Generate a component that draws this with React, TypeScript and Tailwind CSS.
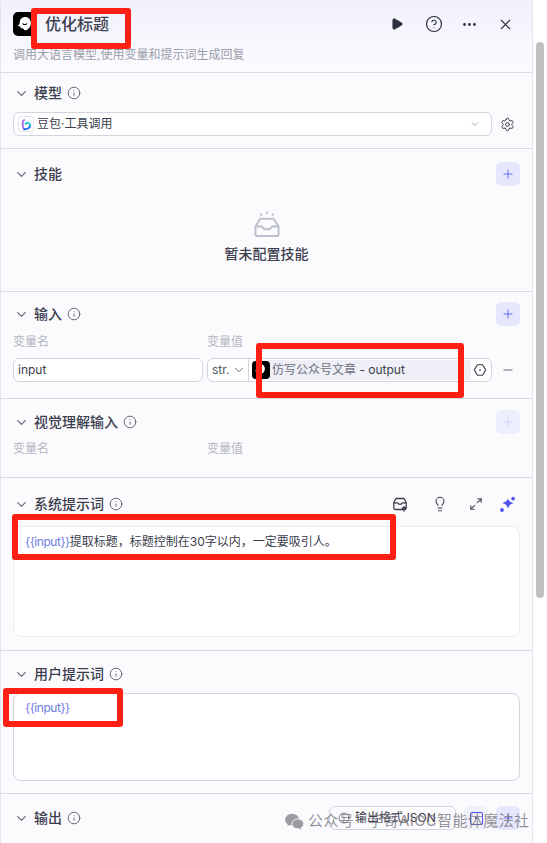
import { ChevronDown, CircleHelp, Ellipsis, Info, Lightbulb, Minus, Play, Plus, Settings, X } from 'lucide-react';
import type { ReactNode } from 'react';

const Logo = ({ className }: { className: string }) => (
  <div className={`flex shrink-0 items-center justify-center rounded-[4px] bg-black ${className}`}>
    <svg viewBox="0 0 24 24" className="h-[84%] w-[84%]">
      <path d="M12 3.500c-3.900 0-6.300 2.800-6.300 6.400 0 1.600-.9 3-2.200 4 .8.8 1.800 1 2.800.8-.1 1 .3 2 1 2.700.7-.4 1.300-.6 2-.5.7 1.200 1.700 2.100 3 2.600 3.600-1 6.600-4.300 6.600-8.800 0-4-2.700-7.200-6.900-7.200z" fill="#fff" />
      <path d="M9.500 11.500c.8 1.500 3.500 1.500 4.500 0" fill="none" stroke="#000" strokeWidth="1.200" strokeLinecap="round" />
    </svg>
  </div>
);

const PlusButton = ({ light }: { light?: boolean }) => (
  <button className={`flex h-6 w-6 items-center justify-center rounded-[5px] ${light ? 'bg-[#eeeffd] text-[#d3d5fb]' : 'bg-[#e6e7fd] text-[#6a6ef2]'}`}>
    <Plus className="h-[14px] w-[14px]" strokeWidth={1.8} />
  </button>
);

const Header = ({ title, noInfo, right }: { title: string; noInfo?: boolean; right?: ReactNode }) => (
  <div className="flex h-6 items-center pr-3 pl-[13px]">
    <ChevronDown className="h-[15px] w-[15px] text-[#5d6072]" strokeWidth={1.8} />
    <span className="ml-[5px] text-sm leading-6 font-medium text-[#3b3d4c]">{title}</span>
    {!noInfo && <Info className="ml-[5px] h-[14px] w-[14px] text-[#55586a]" strokeWidth={1.5} />}
    <div className="ml-auto flex items-center">{right}</div>
  </div>
);

const VarLabels = () => (
  <div className="flex pl-3 text-xs leading-4 text-[#b4b6c0]">
    <span className="w-[194px]">变量名</span>
    <span>变量值</span>
  </div>
);

const Variable = () => <span className="tracking-[-0.45px] text-[#6d7be2]">{'{{input}}'}</span>;

const DoubaoIcon = () => (
  <div className="flex h-4 w-4 items-center justify-center rounded-[3px] border border-[#e3e4ee] bg-white">
    <svg viewBox="0 0 16 16" className="h-[13px] w-[13px]">
      <path d="M5 2.500 C2.800 4 2.500 11 5 13.500" fill="none" stroke="#a66df0" strokeWidth="2.400" strokeLinecap="round" />
      <path d="M5 13.500 C8 14.500 12.500 12.500 12.500 9" fill="none" stroke="#1f6bf5" strokeWidth="2.400" strokeLinecap="round" />
      <path d="M12.500 9 C12.500 6.500 9 5 6.800 7" fill="none" stroke="#25c6d8" strokeWidth="2.400" strokeLinecap="round" />
    </svg>
  </div>
);

const EmptyBox = () => (
  <svg viewBox="0 0 28 28" className="h-[27px] w-[28px]" fill="none" stroke="#bcc0cd" strokeWidth="2" strokeLinecap="round" strokeLinejoin="round">
    <path d="M14 1.200v1.500M7.500 3l.8 1.200M20.500 3l-.8 1.200" strokeWidth="1.700" />
    <path d="M7 8h14l5 8v8a2 2 0 0 1-2 2H4a2 2 0 0 1-2-2v-8z" />
    <path d="M2.500 16H9c.5 2 2.500 3 5 3s4.500-1 5-3h6.500" />
  </svg>
);

const LibraryIcon = () => (
  <svg viewBox="0 0 16 16" className="h-4 w-4" fill="none" stroke="#3b3d4c" strokeWidth="1.300" strokeLinecap="round" strokeLinejoin="round">
    <path d="M4 2.500h8l2.200 4v5.500a1.500 1.500 0 0 1-1.500 1.500H3.300A1.500 1.500 0 0 1 1.800 12V6.500z" />
    <path d="M2 6.800h3.500c.4 1 1.300 1.500 2.500 1.500s2.100-.5 2.500-1.500H14" />
    <path d="M12 15v-4M10.500 12.300 12 10.800l1.500 1.500" stroke="#3b3d4c" />
  </svg>
);

const ExpandIcon = () => (
  <svg viewBox="0 0 16 16" className="h-[14px] w-[14px]" fill="none" stroke="#4d5060" strokeWidth="1.300" strokeLinecap="round" strokeLinejoin="round">
    <path d="M9.500 6.500 14 2M10 2h4v4M6.500 9.500 2 14M2 10v4h4" />
  </svg>
);

const SparkIcon = () => (
  <svg viewBox="0 0 16 16" className="h-[17px] w-[17px]" fill="#4d53f0">
    <path d="M8.500 2c.5 2.400 1.800 3.800 5.500 4.600-3.400.9-4.700 2.200-5.500 5.400-.8-3.200-2.200-4.500-5.500-5.400 3.300-.8 4.700-2.200 5.500-4.600z" />
    <circle cx="13.200" cy="2.500" r="1.700" />
    <circle cx="2.800" cy="13.200" r="1.800" />
  </svg>
);

const HexIcon = () => (
  <svg viewBox="0 0 16 16" className="h-[14px] w-[14px]" fill="none" stroke="#3b3d4c" strokeWidth="1.300" strokeLinejoin="round">
    <path d="M5 2h6l3.500 6-3.500 6H5L1.500 8z" />
    <circle cx="8" cy="8" r="1" fill="#3b3d4c" stroke="none" />
  </svg>
);

const WeChat = () => (
  <svg viewBox="0 0 20 18" className="h-[17px] w-[19px]" fill="#9b9ba1">
    <ellipse cx="7.500" cy="7" rx="7.500" ry="6.300" />
    <path d="M3 11l-.6 3 3.200-1.700z" />
    <ellipse cx="13.500" cy="11.500" rx="6.300" ry="5.300" stroke="#fbfbfe" strokeWidth="1" />
    <path d="M16.500 15.500l1.200 2.300-3.200-1.300z" />
  </svg>
);

export default function App() {
  return (
    <div className="relative flex h-[843px] w-[547px] overflow-hidden bg-white font-['Inter','Noto_Sans_CJK_SC',sans-serif]">
      <div className="flex h-full w-[533px] shrink-0 flex-col border-x border-[#e4e4ee] bg-[#fbfbfe]">
        {/* Title */}
        <div className="h-[73px] shrink-0 border-b border-[#d9d9e8] bg-gradient-to-b from-[#f1f1fc] to-[#fbfbfe] pt-3 pl-3">
          <div className="flex h-6 items-center">
            <Logo className="h-6 w-6 rounded-[5px]" />
            <span className="ml-2 text-base leading-6 font-medium text-[#3d3f4e]">优化标题</span>
            <div className="ml-auto flex items-center text-[#2e3040]">
              <Play className="mr-[-1px] h-[14px] w-[14px] fill-[#2e3040]" strokeWidth={1.5} />
              <CircleHelp className="ml-[22px] h-[18px] w-[18px]" strokeWidth={1.6} />
              <Ellipsis className="ml-[18px] h-[17px] w-[17px]" strokeWidth={2} />
              <X className="mr-[18px] ml-[19px] h-[17px] w-[17px]" strokeWidth={1.6} />
            </div>
          </div>
          <p className="mt-[9px] text-xs leading-5 text-[#9b9daa]">调用大语言模型,使用变量和提示词生成回复</p>
        </div>

        {/* Model */}
        <section className="h-[76px] shrink-0 border-b border-[#d9d9e8] pt-2">
          <Header title="模型" />
          <div className="mt-[7px] flex items-center pr-[17px] pl-3">
            <div className="flex h-6 w-[479px] items-center rounded-[6px] border border-[#d3d4e2] bg-white pr-[10px] pl-1">
              <DoubaoIcon />
              <span className="ml-[3px] text-xs text-[#3b3d4c]">豆包·工具调用</span>
              <ChevronDown className="ml-auto h-3 w-3 text-[#8a8c9a]" strokeWidth={1.5} />
            </div>
            <Settings className="ml-2 h-[15px] w-[15px] text-[#3b3d4c]" strokeWidth={1.6} />
          </div>
        </section>

        {/* Skills */}
        <section className="h-[143px] shrink-0 border-b border-[#d9d9e8] pt-[13px]">
          <Header title="技能" noInfo right={<PlusButton />} />
          <div className="mt-[25px] flex flex-col items-center">
            <EmptyBox />
            <span className="mt-[6px] text-sm leading-5 font-medium text-[#3f4150]">暂未配置技能</span>
          </div>
        </section>

        {/* Input */}
        <section className="h-[107px] shrink-0 border-b border-[#d9d9e8] pt-[10px]">
          <Header title="输入" right={<PlusButton />} />
          <div className="mt-2">
            <VarLabels />
          </div>
          <div className="mt-2 flex items-center pl-3">
            <div className="flex h-6 w-[190px] items-center rounded-[6px] border border-[#d3d4e2] bg-white pl-1 text-xs text-[#3b3d4c]">input</div>
            <div className="ml-1 flex h-6 w-[285px] items-center rounded-[6px] border border-[#d3d4e2] bg-white">
              <div className="flex h-full w-[41px] items-center border-r border-[#d3d4e2] pl-1 text-xs text-[#565867]">
                str.
                <ChevronDown className="ml-[3px] h-[14px] w-[14px] text-[#5d6072]" strokeWidth={1.5} />
              </div>
              <div className="ml-[3px] flex h-5 w-[219px] items-center rounded-[3px] bg-[#eeeff7] text-xs">
                <Logo className="h-[18px] w-[18px]" />
                <span className="ml-[2px] text-[#6d6f7d]">仿写公众号文章</span>
                <span className="text-[#3b3d4c]">&nbsp;- output</span>
              </div>
              <div className="ml-auto pr-[4px]">
                <HexIcon />
              </div>
            </div>
            <Minus className="ml-[9px] h-[14px] w-[14px] text-[#5d6072]" strokeWidth={1.6} />
          </div>
        </section>

        {/* Vision */}
        <section className="h-[79px] shrink-0 border-b border-[#d9d9e8] pt-[11px]">
          <Header title="视觉理解输入" right={<PlusButton light />} />
          <div className="mt-[7px]">
            <VarLabels />
          </div>
        </section>

        {/* System prompt */}
        <section className="h-[173px] shrink-0 border-b border-[#d9d9e8] pt-[14px]">
          <Header
            title="系统提示词"
            right={
              <div className="flex items-center">
                <LibraryIcon />
                <Lightbulb className="ml-6 h-4 w-4 text-[#3b3d4c]" strokeWidth={1.6} />
                <div className="ml-[21px]">
                  <ExpandIcon />
                </div>
                <div className="mr-1 ml-4">
                  <SparkIcon />
                </div>
              </div>
            }
          />
          <div className="mx-3 mt-[10px] h-[111px] rounded-[8px] border border-[#ebebf2] bg-white px-[11px] py-[5px] text-xs leading-5 text-[#3b3d4c]">
            <Variable />提取标题，标题控制在30字以内，一定要吸引人。
          </div>
        </section>

        {/* User prompt */}
        <section className="h-[143px] shrink-0 border-b border-[#d9d9e8] pt-[11px]">
          <Header title="用户提示词" />
          <div className="mx-3 mt-[7px] h-[88px] rounded-[8px] border border-[#d3d4e2] bg-white px-[11px] py-1 text-xs leading-5">
            <Variable />
          </div>
        </section>

        {/* Output */}
        <section className="flex-1 pt-3">
          <Header
            title="输出"
            right={
              <div className="flex items-center">
                <div className="flex h-6 w-[127px] items-center rounded-[6px] border border-[#d3d4e2] pl-[8px] text-xs text-[#3b3d4c]">
                  <Info className="h-3 w-3 text-[#55586a]" strokeWidth={1.5} />
                  <span className="ml-[5px]">输出格式JSON</span>
                </div>
                <div className="ml-2 flex h-6 w-6 items-center justify-center rounded-[5px] bg-[#f0f0f8]">
                  <div className="flex h-[13px] w-[13px] items-center justify-center rounded-[2px] border border-[#4d53f0]">
                    <div className="h-[2px] w-[2px] bg-[#4d53f0]" />
                  </div>
                </div>
                <div className="ml-2">
                  <PlusButton />
                </div>
              </div>
            }
          />
        </section>
      </div>

      {/* Scrollbar */}
      <div className="flex-1 bg-white pt-[42px] pl-[3px]">
        <div className="h-[556px] w-2 rounded-full bg-[#c1c1c1]" />
      </div>

      {/* Red annotations */}
      <div className="absolute top-[8px] left-[31px] h-[41px] w-[100px] rounded-[3px] border-[6px] border-[#fe2015]" />
      <div className="absolute top-[343px] left-[256px] h-[55px] w-[208px] rounded-[3px] border-[6px] border-[#fe2015]" />
      <div className="absolute top-[514px] left-[12px] h-[46px] w-[384px] rounded-[3px] border-[6px] border-[#fe2015]" />
      <div className="absolute top-[688px] left-[3px] h-[39px] w-[120px] rounded-[3px] border-[6px] border-[#fe2015]" />

      {/* Watermark */}
      <div className="absolute top-[811px] left-[285px] flex items-center text-[15px] leading-5 tracking-[0.4px] text-[#77777d]/80">
        <WeChat />
        <span className="ml-[4px]">公众号 · 宇哥AIGC智能体魔法社</span>
      </div>
    </div>
  );
}
